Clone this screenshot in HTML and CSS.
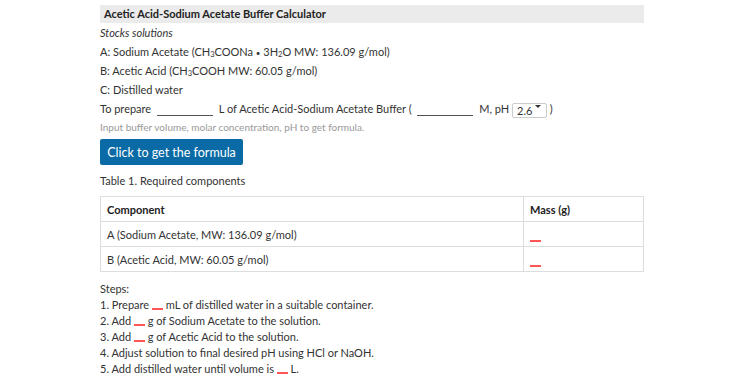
FILE: index.html
```html
<!DOCTYPE html>
<html lang="en">
<head>
  <meta charset="UTF-8">
  <title>Acetic Acid-Sodium Acetate Buffer Calculator</title>
  <link rel="stylesheet" href="styles.css">
</head>
<body>
  <div id="calc">
    <div class="calcTitle">Acetic Acid-Sodium Acetate Buffer Calculator</div>
    <p class="line"><i>Stocks solutions</i></p>
    <p class="line">A: Sodium Acetate (CH<sub>3</sub>COONa <span class="dot">&bull;</span> 3H<sub>2</sub>O MW: 136.09 g/mol)</p>
    <p class="line">B: Acetic Acid (CH<sub>3</sub>COOH MW: 60.05 g/mol)</p>
    <p class="line">C: Distilled water</p>
    <p class="line">To prepare <input class="blank" type="text"> L of Acetic Acid-Sodium Acetate Buffer ( <input class="blank" type="text"> M, pH
      <span class="phWrap"><select class="ph">
        <option>2.6</option>
        <option>2.8</option>
        <option>3.0</option>
      </select></span> )</p>
    <p class="hint">Input buffer volume, molar concentration, pH to get formula.</p>
    <button class="getBtn">Click to get the formula</button>
    <p class="caption">Table 1. Required components</p>
    <table class="comp">
      <tr><th>Component</th><th class="mass">Mass (g)</th></tr>
      <tr><td>A (Sodium Acetate, MW: 136.09 g/mol)</td><td class="mass"><span class="res low"></span></td></tr>
      <tr><td>B (Acetic Acid, MW: 60.05 g/mol)</td><td class="mass"><span class="res low"></span></td></tr>
    </table>
    <div class="steps">
      <p>Steps:</p>
      <p>1. Prepare <span class="res"></span> mL of distilled water in a suitable container.</p>
      <p>2. Add <span class="res"></span> g of Sodium Acetate to the solution.</p>
      <p>3. Add <span class="res"></span> g of Acetic Acid to the solution.</p>
      <p>4. Adjust solution to final desired pH using HCl or NaOH.</p>
      <p>5. Add distilled water until volume is <span class="res"></span> L.</p>
    </div>
  </div>
</body>
</html>
```

FILE: styles.css
```css
body {
  margin:0;
  font-family:Lato, "Noto Sans", sans-serif;
  font-size:11px;
  color:#333;
}
#calc {
  width:544px;
  margin-left:100px;
  padding-top:5px;
}
.calcTitle {
  background:#ebebeb;
  font-weight:bold;
  height:18px;
  line-height:18px;
  padding-left:4px;
  color:#222;
}
.line {
  margin:0;
  height:19px;
  line-height:19px;
}
sub {
  font-size:7.5px;
  line-height:0;
  vertical-align:-1px;
}
.dot {
  font-size:8px;
}
.blank {
  width:56px;
  height:12px;
  border:0;
  border-bottom:1px solid #555;
  padding:0;
  margin:0 3px;
  font:inherit;
}
.phWrap {
  position:relative;
  display:inline-block;
}
.phWrap::after {
  content:"";
  position:absolute;
  right:6px;
  top:6px;
  border-width:3px 3px 0;
  border-style:solid;
  border-color:#333 transparent transparent;
  pointer-events:none;
}
.ph {
  -webkit-appearance:none;
  appearance:none;
  font:inherit;
  font-size:11px;
  width:35px;
  height:15px;
  line-height:13px;
  padding:0 0 0 4px;
  border:1px solid #ccc;
  border-radius:2px;
  background:#fff;
  color:#333;
  vertical-align:middle;
}
.hint {
  margin:0;
  height:18px;
  line-height:18px;
  color:#999;
  font-size:10px;
}
.getBtn {
  margin-top:3px;
  width:143px;
  height:26px;
  padding:0;
  white-space:nowrap;
  background:#0a6aa5;
  color:#fff;
  border:0;
  border-radius:2px;
  font:inherit;
  font-size:12.5px;
}
.caption {
  margin:8px 0 0;
  line-height:16px;
}
.comp {
  margin-top:7px;
  width:544px;
  border-collapse:collapse;
}
.comp th, .comp td {
  border:1px solid #ddd;
  height:24px;
  padding:0 6px;
  text-align:left;
}
.comp th {
  font-weight:bold;
  color:#222;
}
.comp .mass {
  width:107px;
}
.res {
  display:inline-block;
  width:11px;
  height:2px;
  background:#f55;
  vertical-align:-1px;
}
.res.low {
  vertical-align:-4px;
}
.steps {
  margin-top:9px;
}
.steps p {
  margin:0;
  line-height:16px;
}
```
